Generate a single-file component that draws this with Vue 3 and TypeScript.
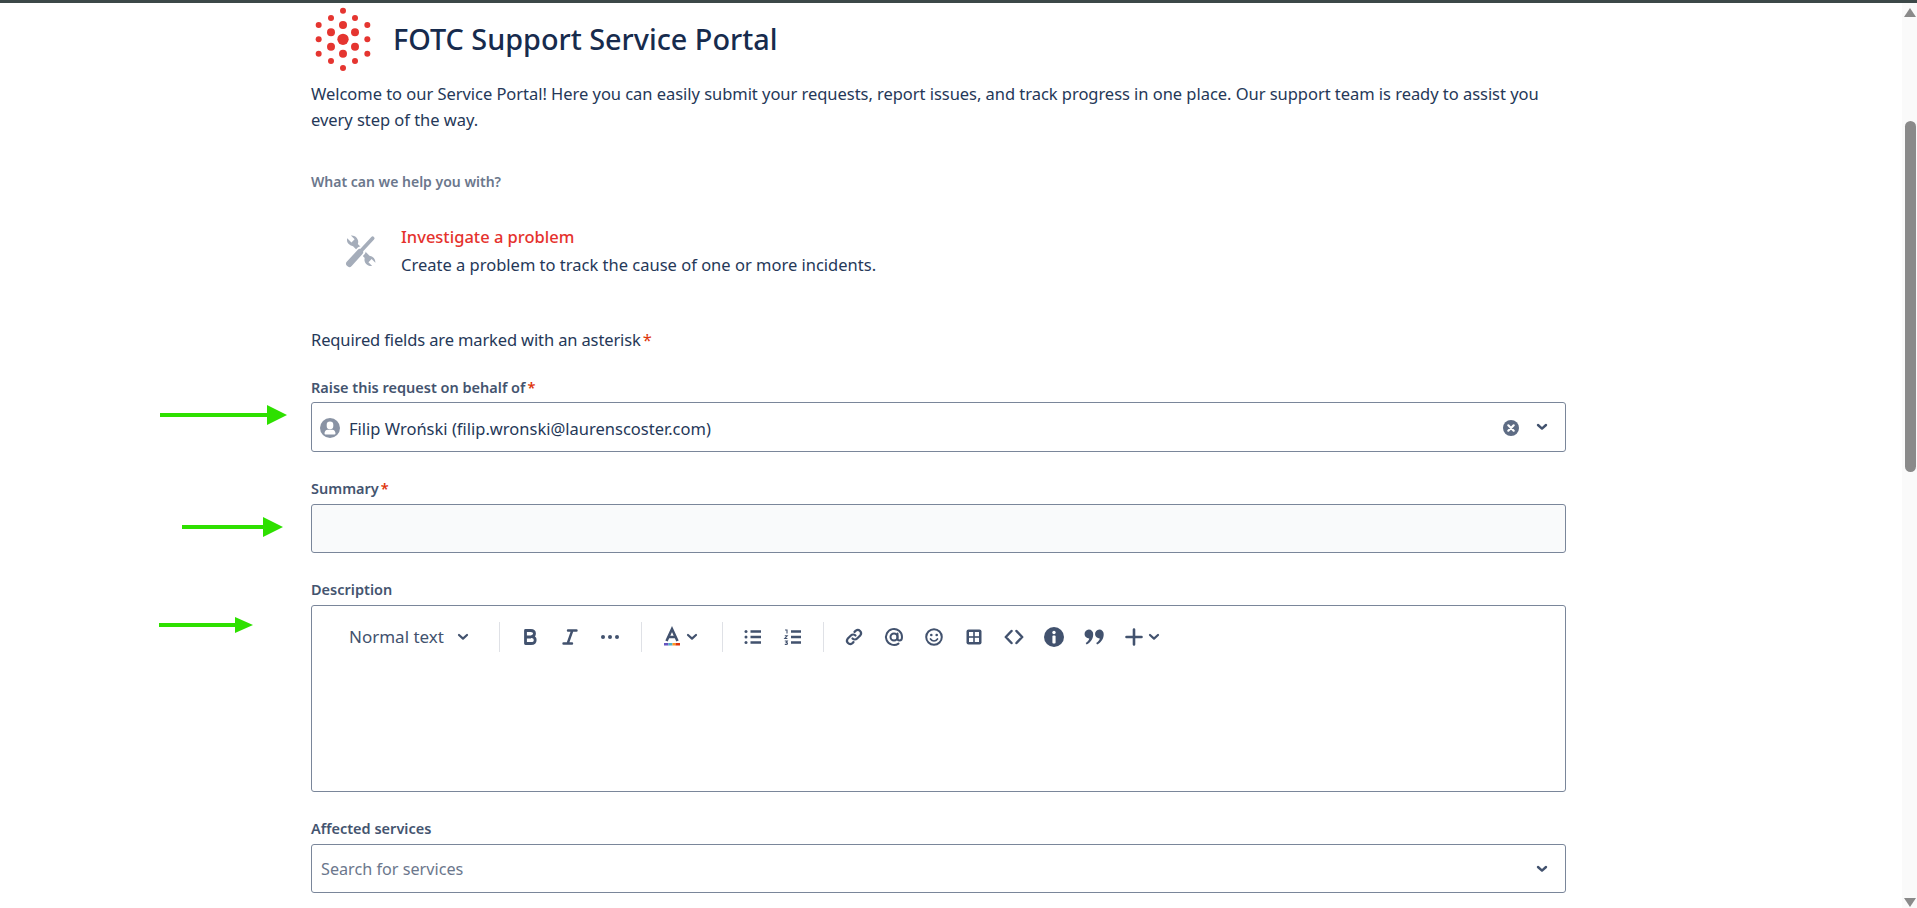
<script setup lang="ts">
const ring1: [number, number][] = [[129,75],[165,97],[165,140],[129,161],[93,140],[93,97]]
const ring2: [number, number][] = [[129,32],[165,54],[202,75],[202,118],[202,161],[165,183],[129,204],[93,183],[56,161],[56,118],[56,75],[93,54]]
</script>

<template>
  <div class="page">
    <div class="topbar"></div>
    <div class="body">
      <main class="main">
        <header class="header">
          <svg class="logo" viewBox="39 15 180 204" aria-hidden="true">
            <circle cx="129" cy="118" r="17" fill="#e53530" />
            <circle v-for="(p, i) in ring1" :key="'a' + i" :cx="p[0]" :cy="p[1]" r="12" fill="#e53530" />
            <circle v-for="(p, i) in ring2" :key="'b' + i" :cx="p[0]" :cy="p[1]" r="9" fill="#e53530" />
          </svg>
          <h1 class="title">FOTC Support Service Portal</h1>
        </header>
        <p class="intro">Welcome to our Service Portal! Here you can easily submit your requests, report issues, and track progress in one place. Our support team is ready to assist you every step of the way.</p>
        <div class="help">What can we help you with?</div>
        <div class="item">
          <svg class="item-icon" viewBox="0 0 32 32" aria-hidden="true">
            <path d="M3.500 6.500 7 10l3-3-3.500-3.500A6 6 0 0 1 13 11.500l11 11a6 6 0 0 1 5.500 6.500L26 25.500l-3 3 3.500 3.500a6 6 0 0 1-7-7.500l-11-11a6 6 0 0 1-5.500-7.500z" transform="translate(0 -2)" fill="#a5adba" />
            <path d="M4 29 16 16" stroke="#fff" stroke-width="9" stroke-linecap="round" />
            <path d="M5 28 15 17" stroke="#a5adba" stroke-width="6" stroke-linecap="round" />
            <path d="M15 17 27 4" stroke="#a5adba" stroke-width="3.500" stroke-linecap="round" />
          </svg>
          <div class="item-text">
            <div class="item-title">Investigate a problem</div>
            <div class="item-desc">Create a problem to track the cause of one or more incidents.</div>
          </div>
        </div>
        <div class="required">Required fields are marked with an asterisk<span class="star">*</span></div>

        <div class="field first">
          <label class="label">Raise this request on behalf of<span class="star">*</span></label>
          <div class="box select">
            <svg class="avatar" viewBox="0 0 20 20" aria-hidden="true">
              <circle cx="10" cy="10" r="10" fill="#8993a4" />
              <path d="M10 3.500a3.300 3.300 0 0 1 3.300 3.300v1.200a3.300 3.300 0 0 1-6.600 0V6.800A3.300 3.300 0 0 1 10 3.500zM4.500 15.500c0-2.500 1.500-3.800 3-3.800h5c1.500 0 3 1.300 3 3.800 0 .6-.4.9-1 .9h-9c-.6 0-1-.3-1-.9z" fill="#fff" />
            </svg>
            <span class="value">Filip Wroński (filip.wronski@laurenscoster.com)</span>
            <svg class="clear" viewBox="0 0 16 16" aria-hidden="true">
              <circle cx="8" cy="8" r="8" fill="#5e6c84" />
              <path d="m5.300 5.300 5.400 5.400m0-5.400-5.400 5.400" stroke="#fff" stroke-width="2.200" stroke-linecap="round" />
            </svg>
            <svg class="chev" viewBox="0 0 12 8" aria-hidden="true"><path d="m2 2 4 3.600L10 2" fill="none" stroke="#42526e" stroke-width="2.400" stroke-linecap="round" stroke-linejoin="round" /></svg>
          </div>
        </div>

        <div class="field">
          <label class="label">Summary<span class="star">*</span></label>
          <div class="box summary"></div>
        </div>

        <div class="field">
          <label class="label">Description</label>
          <div class="box editor">
            <div class="toolbar">
              <div class="tool heading">
                <span>Normal text</span>
                <svg class="chev" viewBox="0 0 12 8" aria-hidden="true"><path d="m2 2 4 3.600L10 2" fill="none" stroke="#42526e" stroke-width="2.200" stroke-linecap="round" stroke-linejoin="round" /></svg>
              </div>
              <i class="sep"></i>
              <div class="tool"><svg viewBox="0 0 24 24"><path d="M7.500 5.500h5.300c2.300 0 3.700 1.200 3.700 3.100 0 1.600-1 2.700-3 3 2.300.2 3.700 1.400 3.700 3.300 0 2.200-1.600 3.600-4.200 3.600H7.500zM7.500 12h5.500" fill="none" stroke="#42526e" stroke-width="2.800" stroke-linejoin="round" /></svg></div>
              <div class="tool"><svg viewBox="0 0 24 24"><path d="M10 5.500h8.500M5.500 18.500H14M14.300 5.500l-4.600 13" fill="none" stroke="#42526e" stroke-width="2.400" stroke-linecap="round" /></svg></div>
              <div class="tool"><svg viewBox="0 0 24 24"><g fill="#42526e"><circle cx="5" cy="12" r="2" /><circle cx="12" cy="12" r="2" /><circle cx="19" cy="12" r="2" /></g></svg></div>
              <i class="sep shift"></i>
              <div class="tool wide">
                <svg viewBox="0 0 24 24"><path d="m6.500 16 5.500-12 5.500 12M8.500 12h7" fill="none" stroke="#42526e" stroke-width="2.600" /><rect x="4" y="18" width="4.500" height="2.500" fill="#6554c0" /><rect x="8.500" y="18" width="4" height="2.500" fill="#4fb0c6" /><rect x="12.500" y="18" width="3" height="2.500" fill="#ff991f" /><rect x="15.500" y="18" width="4.500" height="2.500" fill="#de350b" /></svg>
                <svg class="chev" viewBox="0 0 12 8"><path d="m2 2 4 3.600L10 2" fill="none" stroke="#42526e" stroke-width="2.200" stroke-linecap="round" stroke-linejoin="round" /></svg>
              </div>
              <i class="sep"></i>
              <div class="tool"><svg viewBox="0 0 24 24"><path d="M9.500 6.500H20M9.500 12H20M9.500 17.500H20" stroke="#42526e" stroke-width="2.400" fill="none" /><g fill="#42526e"><circle cx="5" cy="6.500" r="1.500" /><circle cx="5" cy="12" r="1.500" /><circle cx="5" cy="17.500" r="1.500" /></g></svg></div>
              <div class="tool"><svg viewBox="0 0 24 24"><path d="M10 6.500h10M10 12h10M10 17.500h10" stroke="#42526e" stroke-width="2.400" fill="none" /><path d="M4 5h2v3.500M3.800 10.800h2.400l-2.400 2.700h2.600M3.800 16h2.500l-1 1.400c.8 0 1.200.5 1.200 1 0 .6-.6 1-1.400 1H3.800" stroke="#42526e" stroke-width="1.100" fill="none" /></svg></div>
              <i class="sep"></i>
              <div class="tool"><svg viewBox="0 0 24 24"><g fill="none" stroke="#42526e" stroke-width="2.200" stroke-linecap="round"><path d="M10.500 13.500a3.200 3.200 0 0 0 4.600 0l3.300-3.300a3.300 3.300 0 0 0-4.600-4.600l-1.300 1.300" /><path d="M13.500 10.500a3.200 3.200 0 0 0-4.600 0l-3.300 3.300a3.300 3.300 0 0 0 4.600 4.600l1.300-1.300" /></g></svg></div>
              <div class="tool"><svg viewBox="0 0 24 24"><g fill="none" stroke="#42526e" stroke-width="2" stroke-linecap="round"><circle cx="12" cy="12" r="3.500" /><path d="M15.500 8.500v4.700c0 1.500.9 2.300 2 2.300 1.700 0 2.500-1.600 2.500-3.500a8 8 0 1 0-3.500 6.600" /></g></svg></div>
              <div class="tool"><svg viewBox="0 0 24 24"><circle cx="12" cy="12" r="7.800" fill="none" stroke="#42526e" stroke-width="2" /><g fill="#42526e"><circle cx="9.300" cy="10" r="1.300" /><circle cx="14.700" cy="10" r="1.300" /></g><path d="M8.500 14c.9 1.300 2.100 2 3.500 2s2.600-.7 3.500-2" fill="none" stroke="#42526e" stroke-width="1.700" stroke-linecap="round" /></svg></div>
              <div class="tool"><svg viewBox="0 0 24 24"><rect x="4.500" y="4.500" width="15" height="15" rx="2" fill="#42526e" /><g fill="#fff"><rect x="7" y="7" width="4.200" height="4.200" /><rect x="12.800" y="7" width="4.200" height="4.200" /><rect x="7" y="12.800" width="4.200" height="4.200" /><rect x="12.800" y="12.800" width="4.200" height="4.200" /></g></svg></div>
              <div class="tool"><svg viewBox="0 0 24 24"><path d="M9.500 6 3.800 12l5.700 6M14.500 6l5.700 6-5.700 6" fill="none" stroke="#42526e" stroke-width="2.500" stroke-linecap="round" stroke-linejoin="round" /></svg></div>
              <div class="tool"><svg viewBox="0 0 24 24"><circle cx="12" cy="12" r="10" fill="#42526e" /><circle cx="12" cy="7.500" r="1.700" fill="#fff" /><rect x="10.400" y="10.500" width="3.200" height="8" rx="1" fill="#fff" /></svg></div>
              <div class="tool"><svg viewBox="0 0 24 24"><path d="M6.800 4.500a4.400 4.400 0 0 1 4.400 4.700c0 4.600-2.500 8.200-6.600 10.300l-.9-1.600c2.100-1.300 3.300-2.800 3.600-4.400a4.500 4.500 0 0 1-.5-9zM17.300 4.500a4.400 4.400 0 0 1 4.400 4.700c0 4.600-2.500 8.200-6.600 10.300l-.9-1.600c2.100-1.300 3.300-2.800 3.600-4.400a4.500 4.500 0 0 1-.5-9z" fill="#42526e" /></svg></div>
              <div class="tool wide">
                <svg viewBox="0 0 24 24"><path d="M12 4.500v15M4.500 12h15" stroke="#42526e" stroke-width="2.600" stroke-linecap="round" /></svg>
                <svg class="chev" viewBox="0 0 12 8"><path d="m2 2 4 3.600L10 2" fill="none" stroke="#42526e" stroke-width="2.200" stroke-linecap="round" stroke-linejoin="round" /></svg>
              </div>
            </div>
          </div>
        </div>

        <div class="field services">
          <label class="label">Affected services</label>
          <div class="box select">
            <span class="placeholder">Search for services</span>
            <svg class="chev" viewBox="0 0 12 8" aria-hidden="true"><path d="m2 2 4 3.600L10 2" fill="none" stroke="#42526e" stroke-width="2.400" stroke-linecap="round" stroke-linejoin="round" /></svg>
          </div>
        </div>
      </main>

      <aside class="scrollbar" aria-hidden="true">
        <i class="arrow-up"></i>
        <i class="thumb"></i>
        <i class="arrow-down"></i>
      </aside>
    </div>

    <svg class="mark m1" viewBox="0 0 127 20" aria-hidden="true"><path d="M0 8h107V0l20 10-20 10v-8H0z" fill="#2ee000" /></svg>
    <svg class="mark m2" viewBox="0 0 101 20" aria-hidden="true"><path d="M0 8h81V0l20 10-20 10v-8H0z" fill="#2ee000" /></svg>
    <svg class="mark m3" viewBox="0 0 94 16" aria-hidden="true"><path d="M0 6h76V0l18 8-18 8v-6H0z" fill="#2ee000" /></svg>
  </div>
</template>

<style>
html, body { margin: 0; overflow: hidden; background: #fff; }
</style>

<style scoped>
.page { position: relative; width: 1917px; height: 908px; overflow: hidden; background: #fff; font-family: "Noto Sans", "Open Sans", sans-serif; color: #172b4d; }
.topbar { height: 3px; background: #3c4848; }
.body { display: flex; height: 905px; }
.main { flex: 1; padding-left: 311px; box-sizing: border-box; }
.main > * { width: 1255px; box-sizing: border-box; }
.header { display: flex; align-items: center; height: 72px; padding-left: 2px; gap: 20px; }
.logo { width: 60px; height: 68px; flex: none; }
.title { margin: 0; font-size: 28.8px; font-weight: 500; line-height: 36px; color: #172b4d; }
.intro { margin: 6px 0 0; font-size: 16.500px; line-height: 26px; letter-spacing: -0.04px; color: #253858; }
.help { margin-top: 39px; font-size: 14px; line-height: 20px; font-weight: 600; color: #6b778c; }
.item { display: flex; margin-top: 31px; padding-left: 33px; gap: 23px; align-items: center; }
.item-icon { width: 34px; height: 34px; flex: none; }
.item-text { line-height: 28px; font-size: 16.500px; }
.item-title { color: #e5322d; font-weight: 500; }
.item-desc { color: #253858; }
.required { margin-top: 49px; font-size: 16.500px; line-height: 24px; letter-spacing: -0.13px; color: #253858; }
.star { color: #de350b; margin-left: 2px; }
.field { display: flex; flex-direction: column; gap: 6px; margin-top: 27px; }
.field.first { margin-top: 26px; gap: 5px; }
.label { font-size: 14.500px; line-height: 19px; font-weight: 600; color: #44546f; }
.box { box-sizing: border-box; border: 1px solid #7a869a; border-radius: 3px; background: #fff; }
.select { display: flex; align-items: center; height: 50px; padding: 0 17px 0 8px; }
.services .select { height: 49px; padding-left: 9px; }
.avatar { width: 20px; height: 20px; flex: none; margin-right: 9px; margin-top: 2px; }
.value { flex: 1; font-size: 16.500px; margin-top: 3px; color: #253858; }
.placeholder { flex: 1; font-size: 16.200px; color: #6b778c; }
.clear { width: 16px; height: 16px; margin-right: 17px; flex: none; margin-top: 1px; }
.chev { width: 12px; height: 8px; flex: none; }
.summary { height: 49px; background: #f9fafb; }
.editor { height: 187px; }
.toolbar { display: flex; align-items: center; height: 30px; margin-top: 16px; padding-left: 37px; }
.tool { display: flex; align-items: center; justify-content: center; width: 40px; height: 30px; flex: none; }
.tool svg { width: 24px; height: 24px; flex: none; }
.tool svg.chev { width: 12px; height: 8px; }
.tool.heading { width: 140px; justify-content: flex-start; gap: 13px; font-size: 17px; line-height: 28px; color: #42526e; }
.tool.heading span { margin-top: -1px; }
.tool.wide { width: 60px; justify-content: flex-start; padding-left: 8px; box-sizing: border-box; gap: 2px; }
.sep { display: block; width: 1px; height: 30px; background: #dfe1e6; margin: 0 10px; flex: none; }
.sep.shift { margin-left: 11px; }
.scrollbar { position: relative; width: 15px; flex: none; background: #fafafa; }
.thumb { position: absolute; left: 3px; top: 118px; width: 11px; height: 351px; border-radius: 6px; background: #8a8a8a; }
.arrow-up { position: absolute; left: 2px; top: 5px; width: 0; height: 0; border-left: 6px solid transparent; border-right: 6px solid transparent; border-bottom: 9px solid #8a8a8a; }
.arrow-down { position: absolute; left: 2px; bottom: 1px; width: 0; height: 0; border-left: 6px solid transparent; border-right: 6px solid transparent; border-top: 9px solid #8a8a8a; }
.mark { position: absolute; }
.m1 { left: 160px; top: 405px; width: 127px; height: 20px; }
.m2 { left: 182px; top: 517px; width: 101px; height: 20px; }
.m3 { left: 159px; top: 617px; width: 94px; height: 16px; }
</style>
